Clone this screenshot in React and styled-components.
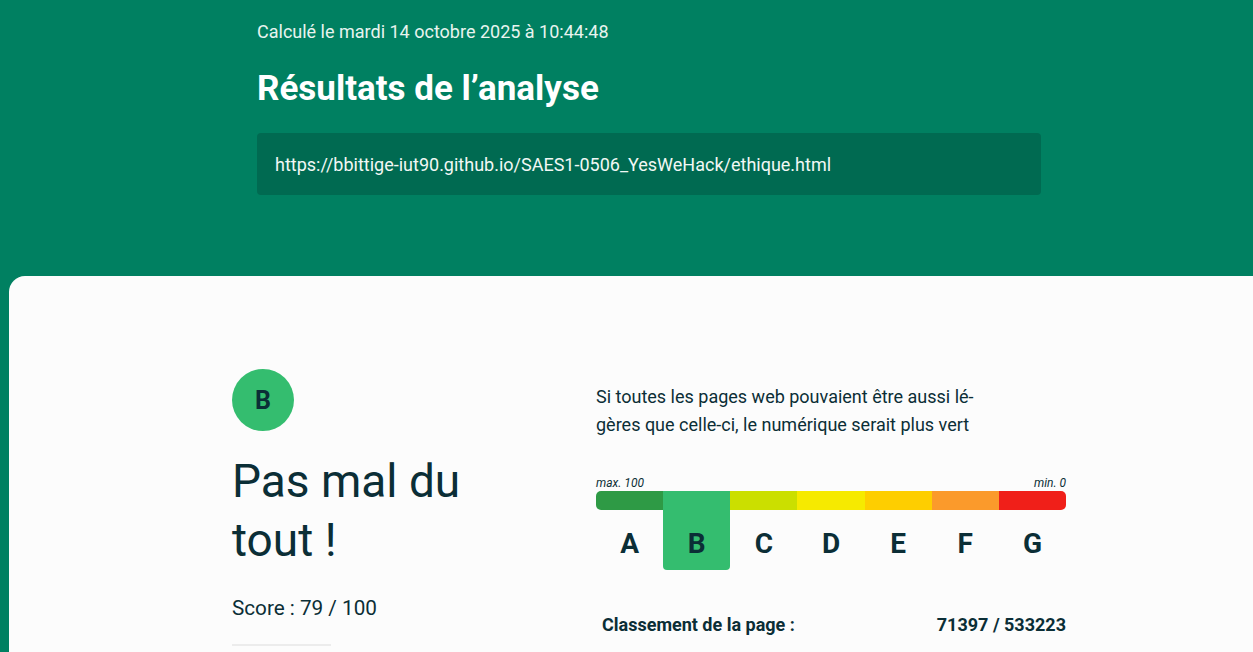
import React from "react";
import styled, { createGlobalStyle } from "styled-components";

const Global = createGlobalStyle`
  html, body { margin: 0; padding: 0; }
  body {
    font-family: Roboto, "Liberation Sans", sans-serif;
    background: #008061;
    color: #0b2e36;
    overflow: hidden;
  }
`;

const Page = styled.div`
  min-height: 652px;
  background: #008061;
`;

const Header = styled.header`
  padding: 20px 0 81px 257px;
`;

const HeaderInner = styled.div`
  width: 784px;
`;

const DateLine = styled.p`
  margin: 0;
  font-size: 18px;
  line-height: 24px;
  color: #e8f4ef;
`;

const Title = styled.h1`
  margin: 26px 0 0;
  font-size: 35px;
  line-height: 38px;
  font-weight: 700;
  color: #ffffff;
`;

const UrlBox = styled.div`
  margin-top: 25px;
  height: 62px;
  display: flex;
  align-items: center;
  padding: 0 18px;
  background: #006a51;
  border-radius: 4px;
  color: #f2f8f5;
  font-size: 18px;
`;

const Card = styled.main`
  margin-left: 9px;
  background: #fcfcfc;
  border-top-left-radius: 16px;
  padding: 93px 0 40px 223px;
  display: grid;
  grid-template-columns: 364px 470px;
`;

const LeftCol = styled.section`
  display: flex;
  flex-direction: column;
  align-items: flex-start;
`;

const Badge = styled.div`
  width: 62px;
  height: 62px;
  border-radius: 50%;
  background: #34bd6f;
  display: flex;
  align-items: center;
  justify-content: center;
  font-size: 25px;
  font-weight: 700;
  color: #0b2e36;
`;

const Verdict = styled.h2`
  margin: 21px 0 0;
  width: 300px;
  font-size: 46px;
  line-height: 59px;
  font-weight: 400;
  color: #0b2e36;
`;

const Score = styled.p`
  margin: 23px 0 0;
  font-size: 20.7px;
  line-height: 30px;
`;

const Divider = styled.div`
  margin-top: 21px;
  width: 99px;
  height: 2px;
  background: #ececec;
`;

const RightCol = styled.section`
  padding-top: 14px;
`;

const Lead = styled.p`
  margin: 0;
  width: 400px;
  font-size: 18px;
  line-height: 28px;
`;

const ScaleLabels = styled.div`
  margin-top: 37px;
  display: flex;
  justify-content: space-between;
  font-size: 12px;
  line-height: 15px;
  font-style: italic;
`;

const Scale = styled.div`
  display: grid;
  grid-template-columns: repeat(7, 1fr);
`;

const Column = styled.div`
  display: flex;
  flex-direction: column;
`;

const Seg = styled.div`
  height: 19px;
  background: ${(p) => p.$color};
  border-radius: ${(p) => (p.$first ? "5px 0 0 5px" : p.$last ? "0 5px 5px 0" : "0")};
`;

const Letter = styled.div`
  height: 60px;
  box-sizing: border-box;
  padding-top: 19px;
  text-align: center;
  font-size: 28px;
  line-height: 30px;
  font-weight: 700;
  background: ${(p) => (p.$active ? p.$color : "transparent")};
  border-radius: 0 0 4px 4px;
`;

const Rank = styled.div`
  margin-top: 43px;
  display: flex;
  justify-content: space-between;
  padding-left: 6px;
  font-size: 18px;
  line-height: 24px;
  font-weight: 700;
`;

const grades = [
  ["A", "#2e9a45"],
  ["B", "#34bd6f"],
  ["C", "#cbdf00"],
  ["D", "#f6ea00"],
  ["E", "#fece00"],
  ["F", "#fb9a2b"],
  ["G", "#f01f19"],
];

export default function App() {
  return (
    <Page>
      <Global />
      <Header>
        <HeaderInner>
          <DateLine>Calculé le mardi 14 octobre 2025 à 10:44:48</DateLine>
          <Title>Résultats de l’analyse</Title>
          <UrlBox>https://bbittige-iut90.github.io/SAES1-0506_YesWeHack/ethique.html</UrlBox>
        </HeaderInner>
      </Header>
      <Card>
        <LeftCol>
          <Badge>B</Badge>
          <Verdict>Pas mal du tout !</Verdict>
          <Score>Score : 79 / 100</Score>
          <Divider />
        </LeftCol>
        <RightCol>
          <Lead>
            Si toutes les pages web pouvaient être aussi lé{"\u00AD"}gères que celle-ci, le numérique serait plus vert
          </Lead>
          <ScaleLabels>
            <span>max. 100</span>
            <span>min. 0</span>
          </ScaleLabels>
          <Scale>
            {grades.map(([g, c], i) => (
              <Column key={g}>
                <Seg $color={c} $first={i === 0} $last={i === grades.length - 1} />
                <Letter $active={g === "B"} $color={c}>{g}</Letter>
              </Column>
            ))}
          </Scale>
          <Rank>
            <span>Classement de la page :</span>
            <span>71397 / 533223</span>
          </Rank>
        </RightCol>
      </Card>
    </Page>
  );
}
